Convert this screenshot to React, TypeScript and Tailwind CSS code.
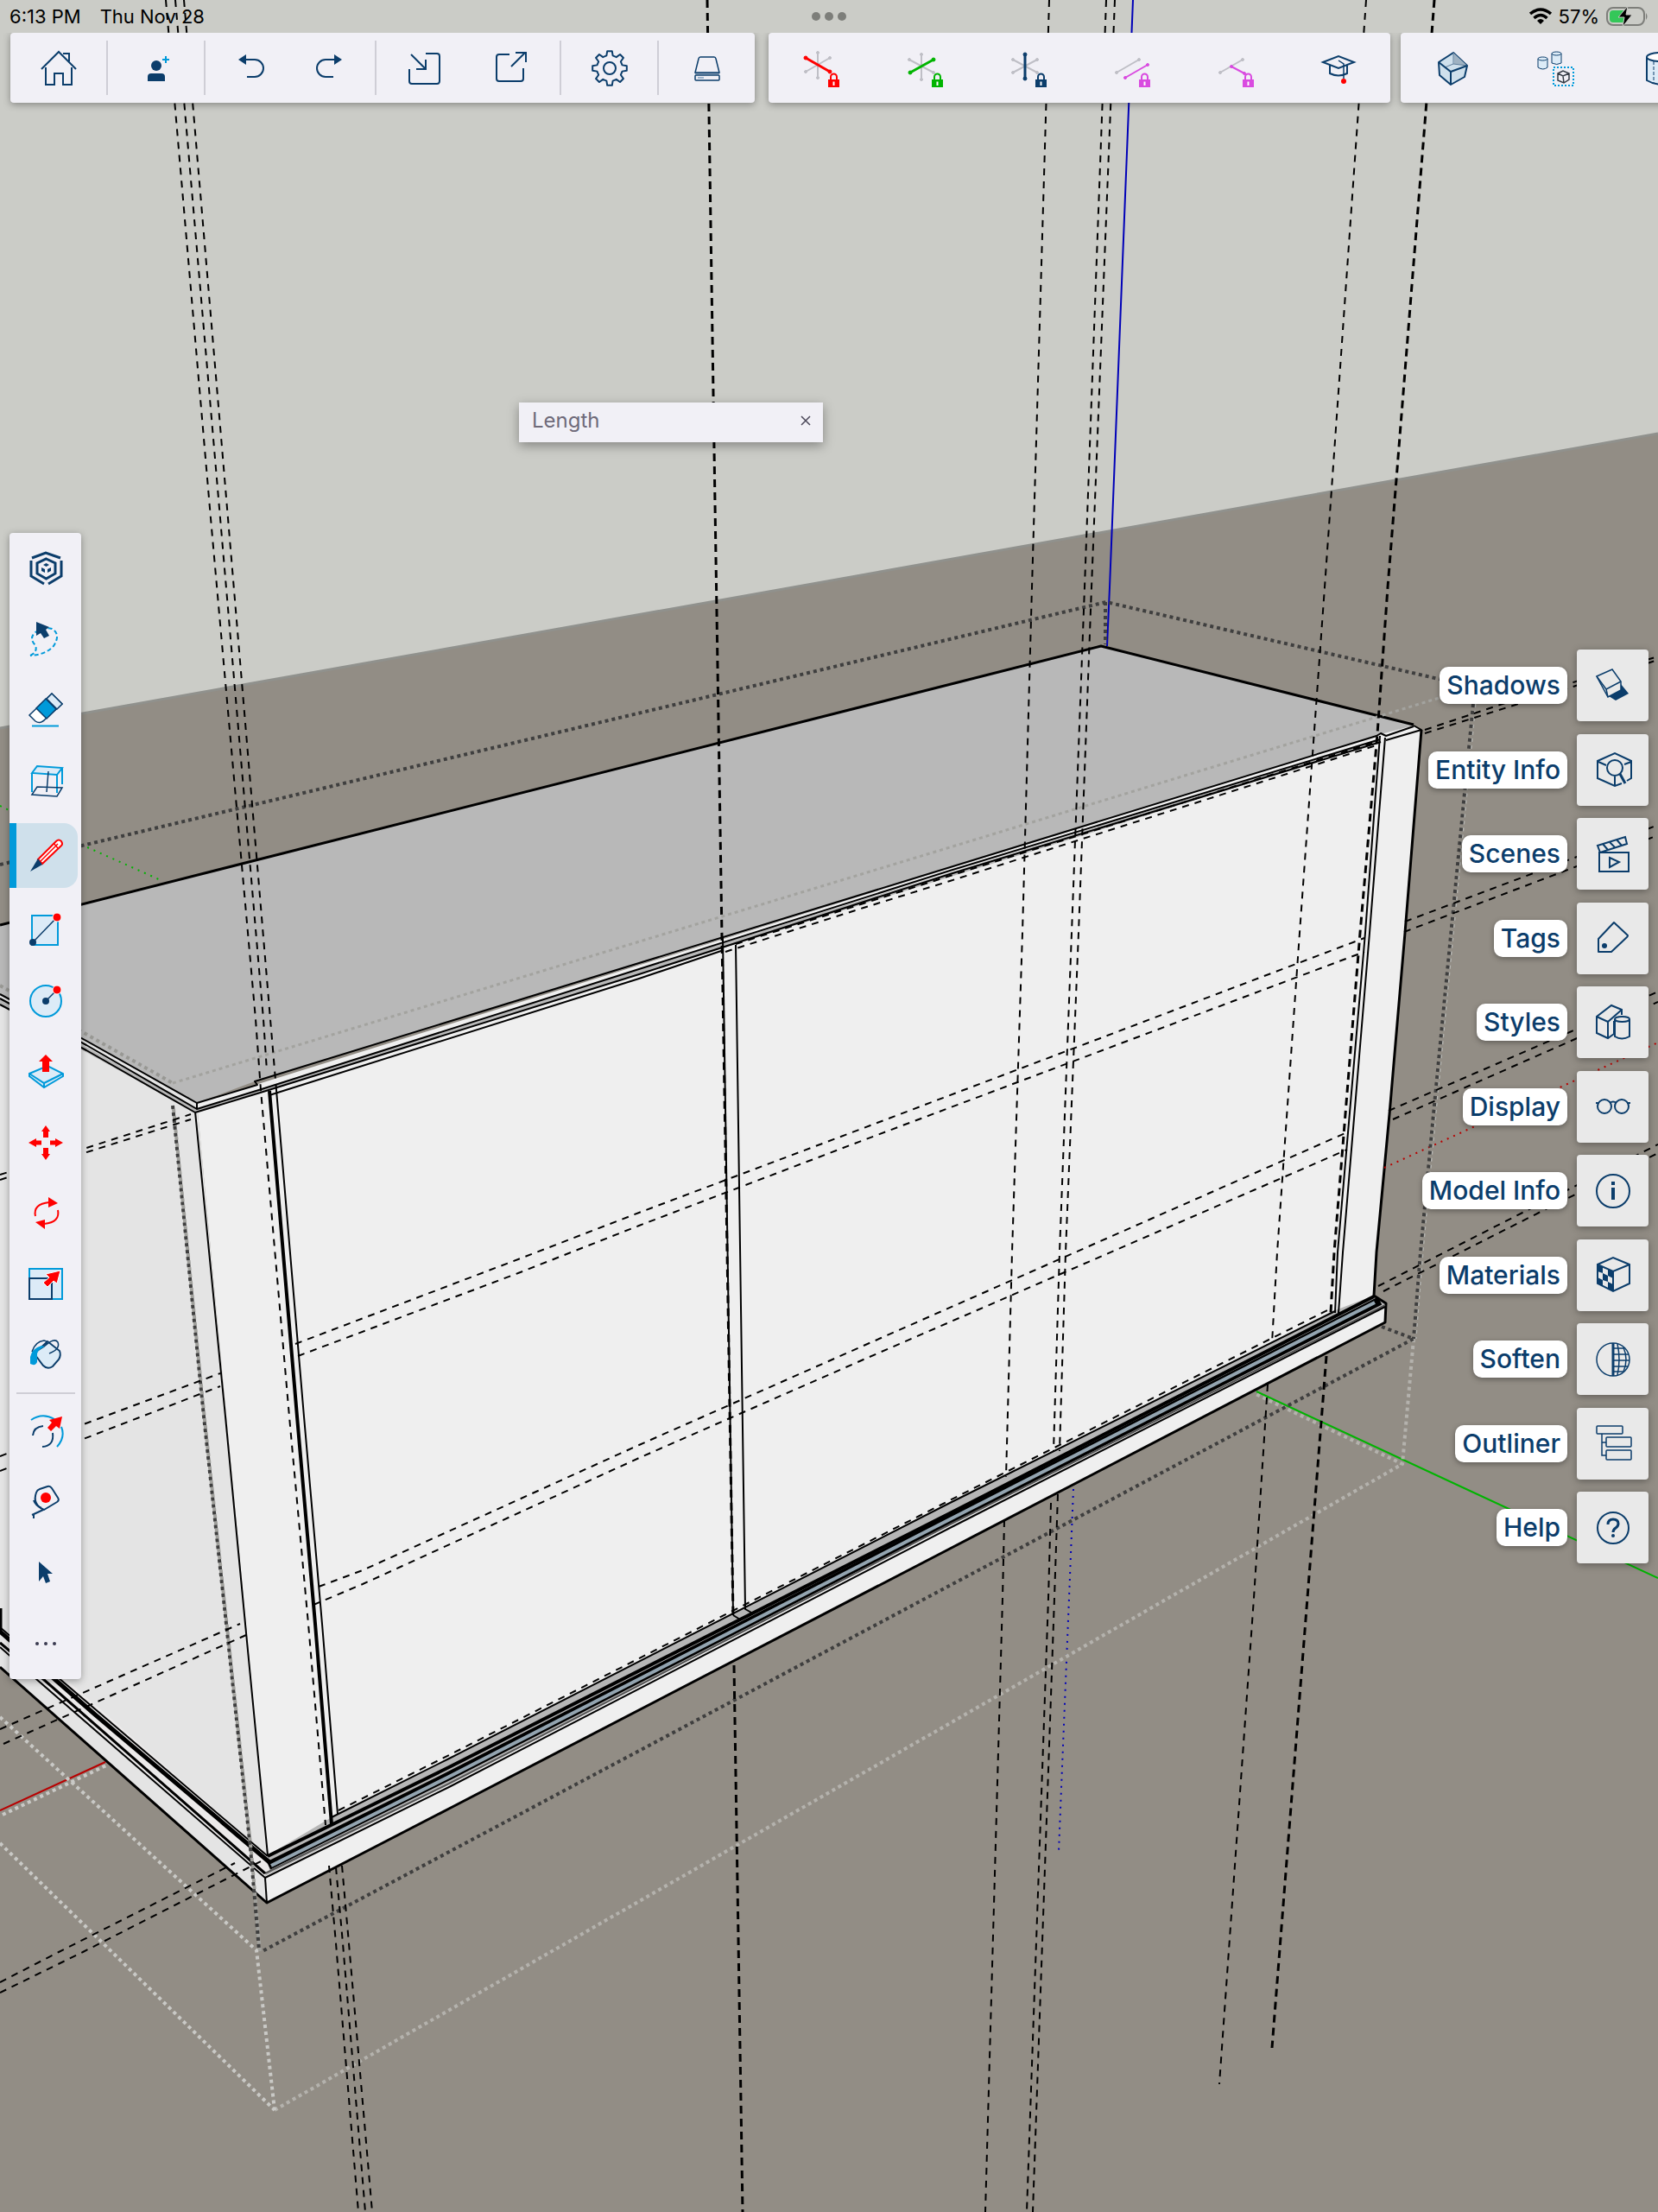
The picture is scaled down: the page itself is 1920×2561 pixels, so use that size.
import type { ReactNode } from "react"

const NAVY = "#0b3d6b"
const BLUE = "#009ada"
const PALE = "#dcebf7"
const RED = "#ff0000"
const GREY = "#bfbfc6"
const MAGENTA = "#d94be0"

/* ---------- model viewport ---------- */

const thinGuides = [
  // vertical guides, back left
  "M192 0L244 600L296 1180L302 1262L335 1640L357 1880L377 2113",
  "M203 0L255 600L305 1180L309 1240",
  "M213 0L264 600L313 1180L320 1262",
  "M381 2160L389 2250L415 2561",
  "M389 2162L397 2250L423 2561",
  "M396 2160L404 2250L431 2561",
  // vertical guides, right half
  "M1215 0L1195 680L1184 1080L1172 1450L1165 1710",
  "M1163 1760L1161 1850L1141 2561",
  "M1281 0L1256 680L1241 1080L1227 1450L1220 1680",
  "M1217 1740L1214 1850L1189 2561",
  "M1291 0L1264 680L1249 1080L1234 1450L1227 1680",
  "M1225 1730L1221 1850L1196 2561",
  "M1582 0L1534 680L1505 1080L1479 1450L1473 1555",
  "M1468 1603L1452 1850L1412 2413",
  // shelves on the front
  "M342 1556L600 1458L740 1404L1000 1306L1580 1086",
  "M345 1570L600 1474L740 1419L1000 1320L1580 1102",
  "M369 1837L420 1818L740 1673L1000 1558L1560 1311",
  "M363 1858L420 1834L740 1688L1000 1574L1560 1331",
  "M840 1102L1000 1051L1100 1020L1594 863",
  "M852 1093L1000 1046L1100 1014L1590 860",
  "M392 2096L520 2032L1100 1737L1541 1515",
  // past the right side
  "M1650 845L1740 815L1920 760",
  "M1650 849L1755 816L1920 764",
  "M1627 1067L1826 992L1920 955",
  "M1626 1079L1826 1003L1920 967",
  "M1608 1286L1820 1194L1920 1148",
  "M1613 1296L1824 1203L1920 1160",
  "M1596 1489L1765 1403L1920 1325",
  "M1602 1495L1782 1404L1920 1335",
  // left side
  "M0 1360L94 1331L221 1290",
  "M0 1366L94 1336L221 1296",
  "M0 1686L94 1650L255 1590",
  "M0 1703L94 1667L255 1605",
  "M0 2002L278 1880",
  "M4 2019L285 1893",
  "M0 2295L68 2260L272 2157",
  "M0 2307L96 2260L304 2154",
]

const boldGuides = [
  "M819 0L827 520L836 1085L849 1870",
  "M850 1928L860 2561",
  "M1661 0L1651 130L1607 680L1595 850L1575 1080L1545 1450L1541 1520",
  "M1536 1570L1514 1850L1473 2371",
]

const darkDots = [
  "M0 1001L95 979L1281 697L1670 787",
  "M1706 815L1660 1290L1645 1450L1637 1550",
  "M1600 1536L1637 1550L302 2260",
  "M1280 697V746",
  "M200 1280L236 1640L262 1880L290 2140L300 2258",
]

const lightDots = ["M0 1988L297 2258L318 2443", "M0 2134L318 2443", "M3 2101L125 2043"]

const edges = [
  "M226 1287L261 1640L284 1880L310 2148",
  "M228 1277L298 1256L295 1252L1594 852L1599 849L1605 852L1637 841",
  "M228 1277V1284L303 1261L740 1122L1100 1008L1598 856",
  "M226 1288L308 1263L740 1128L1100 1012L1599 859",
  "M312 1268L740 1133L838 1100",
  "M228 1277L100 1205L0 1151",
  "M228 1284L100 1210L0 1156",
  "M226 1288L100 1216L0 1163",
  "M320 1262L352 1640L373 1880L391 2100",
  "M837 1086L849 1870",
  "M852 1094L863 1863L872 1868",
  "M849 1870L857 1875",
  "M1598 852L1581 1080L1549 1450L1546 1520",
  "M1604 854L1586 1080L1555 1450L1550 1520",
  "M1605 857L1646 845L1637 840",
]

function Viewport() {
  return (
    <svg
      aria-hidden="true"
      className="absolute inset-0 h-full w-full"
      viewBox="0 0 1920 2561"
      preserveAspectRatio="xMidYMid slice"
      fill="none"
      strokeLinejoin="round"
    >
      <rect width="1920" height="2561" fill="#cbccc7" />
      <path d="M0 843L1920 502V2561H0Z" fill="#928d85" />
      <path d="M0 843L1920 502" stroke="#90918d" strokeWidth="3" />

      {/* carcass */}
      <path d="M0 1071L1275 748L1637 839L1605 853L295 1252L228 1277L0 1151Z" fill="#b8b8b8" />
      <path d="M0 1151L228 1277L310 2148L309 2203L0 1930Z" fill="#e4e4e4" />
      <path d="M228 1277L1599 850L1637 840L1646 845L1591 1500L1605 1509L1604 1531L309 2203L307 2172L310 2148Z" fill="#efefef" />
      <path d="M0 1156L228 1284L740 1122L1598 856L1599 859L740 1128L226 1288L0 1163Z" fill="#b8b8b8" />

      {/* base rails */}
      <path d="M384 2104L520 2036L1100 1740L1541 1519L1591 1500L1605 1509L1100 1766L520 2066L307 2172L310 2148Z" fill="#b6b6b6" />
      <path d="M12 1888L310 2148L312 2166L306 2172L0 1905Z" fill="#eceaea" />

      <g stroke="#000">
        <path d="M0 1071L1275 748L1637 839" strokeWidth="3" />
        <path d="M1646 845L1627 1080L1609 1290L1594 1450L1591 1500L1605 1509L1604 1531L1100 1793L520 2094L309 2203L0 1930" strokeWidth="3" />
        <path d="M312 1263L344 1640L365 1880L384 2112" strokeWidth="4" />
        {edges.map((d) => (
          <path key={d} d={d} strokeWidth="2" />
        ))}
        <path d="M384 2104L520 2036L1100 1740L1546 1518" strokeWidth="2" />
        <path d="M310 2149L520 2046L1100 1752L1591 1501" strokeWidth="4" />
        <path d="M311 2160L520 2056L1100 1759L1598 1506" strokeWidth="10" />
        <path d="M307 2169L520 2065L1100 1765L1604 1511" stroke="#555" strokeWidth="2" />
        <path d="M307 2174L520 2069L1100 1769L1604 1513" strokeWidth="2" />
        <path d="M307 2174L309 2203" strokeWidth="2" />
        <path d="M0 1884L67 1942L310 2149" strokeWidth="2" />
        <path d="M0 1889L110 1985L312 2156" strokeWidth="5" />
        <path d="M0 1902L50 1944L307 2169" strokeWidth="3" />
        <path d="M0 1907L42 1944L307 2174" strokeWidth="2" />
        <path d="M0 1862V1890" strokeWidth="5" />
      </g>
      <path d="M314 2160L520 2057L1100 1759L1592 1508" stroke="#93a4b0" strokeWidth="4" />

      {/* axes */}
      <path d="M1312 0L1285 680L1282 748" stroke="#0000b8" strokeWidth="2" />
      <path d="M1455 1611L1700 1725L1920 1827" stroke="#00b400" strokeWidth="2" />
      <path d="M0 2096L122 2040" stroke="#b80000" strokeWidth="2" />
      <path d="M1243 1724L1238 1850L1226 2144" stroke="#0000b8" strokeWidth="2" strokeDasharray="2 6" />
      <path d="M0 933L90 976L186 1019" stroke="#00b400" strokeWidth="2" strokeDasharray="2 6" />
      <path d="M1603 1352L1920 1207" stroke="#b80000" strokeWidth="2" strokeDasharray="2 6" />

      {/* selection bounds */}
      <g stroke="#c9c9c6" strokeWidth="4" strokeDasharray="4 4">
        <path d="M200 1254L1100 981L1670 807" stroke="#a3a39f" strokeWidth="3" />
        <path d="M0 1141L200 1254" stroke="#989894" />
        <path d="M1708 815L1662 1290L1647 1450L1639 1550" stroke="#b5b5b1" strokeWidth="3" />
        <path d="M201 1284L237 1644L263 1884L291 2144L301 2260" stroke="#a0a09c" />
        <path d="M318 2443L1624 1695L1452 1613M1637 1550L1624 1695" stroke="#b4b2ad" />
        {lightDots.map((d) => (
          <path key={d} d={d} />
        ))}
      </g>
      <g stroke="#3f3f3f" strokeWidth="4" strokeDasharray="4 4">
        {darkDots.map((d) => (
          <path key={d} d={d} />
        ))}
      </g>

      <g stroke="#000" strokeWidth="2" strokeDasharray="8 7">
        {thinGuides.map((d) => (
          <path key={d} d={d} />
        ))}
      </g>
      <g stroke="#000" strokeWidth="3" strokeDasharray="9 6">
        {boldGuides.map((d) => (
          <path key={d} d={d} />
        ))}
      </g>
    </svg>
  )
}

/* ---------- icons ---------- */

function Icon({ children, tall = false }: { children: ReactNode; tall?: boolean }) {
  return (
    <svg
      aria-hidden="true"
      className={tall ? "h-[60px] w-12" : "h-12 w-12"}
      viewBox={tall ? "0 0 48 60" : "0 0 48 48"}
      fill="none"
      stroke={NAVY}
      strokeWidth="2"
    >
      {children}
    </svg>
  )
}

function gearPath() {
  const parts: string[] = []
  for (let i = 0; i < 8; i++) {
    const steps = [
      [15, -14],
      [20, -8],
      [20, 8],
      [15, 14],
    ]
    for (const [r, a] of steps) {
      const t = ((i * 45 + a) * Math.PI) / 180
      parts.push(`${(24 + r * Math.sin(t)).toFixed(2)} ${(24 - r * Math.cos(t)).toFixed(2)}`)
    }
  }
  return `M${parts.join("L")}Z`
}

function Lock({ color }: { color: string }) {
  return (
    <g stroke={color}>
      <path d="M36 44V40a3.5 3.5 0 0 1 7 0V44" />
      <rect x="33" y="43" width="13" height="9" fill={color} stroke="none" />
      <path d="M39.5 45.5V50" stroke="#fff" />
    </g>
  )
}

function Rod({ x1, y1, x2, y2, color, bold }: { x1: number; y1: number; x2: number; y2: number; color: string; bold?: boolean }) {
  return (
    <g stroke={color} fill={color}>
      <line x1={x1} y1={y1} x2={x2} y2={y2} strokeWidth={bold ? 3 : 2} />
      <circle cx={x1} cy={y1} r={bold ? 2 : 1.5} strokeWidth="1" />
      <circle cx={x2} cy={y2} r={bold ? 2 : 1.5} strokeWidth="1" />
    </g>
  )
}

const fileGroups = [
  {
    pad: "px-[10px]",
    items: [
      {
        name: "Home",
        width: "w-[91px]",
        icon: (
          <Icon>
            <path d="M4 25L24 5L44 25M29 7H36V16M9 23V43H19V30H29V43H39V23" />
          </Icon>
        ),
      },
    ],
  },
  {
    pad: "px-[10px]",
    items: [
      {
        name: "Add collaborator",
        width: "w-[91px]",
        icon: (
          <Icon>
            <circle cx="24" cy="21" r="6" fill={NAVY} stroke="none" />
            <path d="M14 39V34Q14 30 18 30H30Q34 30 34 34V39Z" fill={NAVY} stroke="none" />
            <path d="M35 10V18M31 14H39" stroke={BLUE} />
          </Icon>
        ),
      },
    ],
  },
  {
    pad: "px-2",
    items: [
      {
        name: "Undo",
        width: "w-[90px]",
        icon: (
          <Icon>
            <path d="M17 14H28a10 10 0 0 1 0 20H19" />
            <path d="M9 14L18 8V20Z" fill={NAVY} stroke="none" />
          </Icon>
        ),
      },
      {
        name: "Redo",
        width: "w-[90px]",
        icon: (
          <Icon>
            <path d="M31 14H20a10 10 0 0 0 0 20H29" />
            <path d="M39 14L30 8V20Z" fill={NAVY} stroke="none" />
          </Icon>
        ),
      },
    ],
  },
  {
    pad: "px-[6px]",
    items: [
      {
        name: "Import",
        width: "w-[100px]",
        icon: (
          <Icon>
            <path d="M8 8L25 25M14 25H25V14M25 7H38Q41 7 41 10V39Q41 42 38 42H9Q6 42 6 39V25" />
          </Icon>
        ),
      },
      {
        name: "Export",
        width: "w-[100px]",
        icon: (
          <Icon>
            <path d="M22 8H10Q7 8 7 11V36Q7 39 10 39H35Q38 39 38 36V24M24 22L40 6M29 6H41V17" />
          </Icon>
        ),
      },
    ],
  },
  {
    pad: "px-[10px]",
    items: [
      {
        name: "Settings",
        width: "w-[91px]",
        icon: (
          <Icon>
            <path d={gearPath()} strokeLinejoin="round" />
            <circle cx="24" cy="24" r="7" />
          </Icon>
        ),
      },
    ],
  },
  {
    pad: "px-[10px]",
    items: [
      {
        name: "Storage",
        width: "w-[91px]",
        icon: (
          <Icon>
            <path d="M16 11H32Q33.5 11 34 13L38 29H10L14 13Q14.5 11 16 11Z" strokeWidth="1.5" />
            <path d="M10 30H38" strokeWidth="1" />
            <rect x="10" y="32" width="28" height="6" rx="1" strokeWidth="1.5" />
            <path d="M13 35H20" stroke="#9db4cc" />
          </Icon>
        ),
      },
    ],
  },
]

const axisTools = [
  {
    name: "Lock red axis",
    icon: (
      <Icon tall>
        <Rod x1={21} y1={12} x2={21} y2={41} color={GREY} />
        <Rod x1={35} y1={18} x2={7} y2={34} color={GREY} />
        <Rod x1={7} y1={18} x2={35} y2={34} color={RED} bold />
        <Lock color={RED} />
      </Icon>
    ),
  },
  {
    name: "Lock green axis",
    icon: (
      <Icon tall>
        <Rod x1={21} y1={14} x2={21} y2={43} color={GREY} />
        <Rod x1={7} y1={20} x2={35} y2={35} color={GREY} />
        <Rod x1={35} y1={20} x2={8} y2={35} color="#00b400" bold />
        <Lock color="#00b400" />
      </Icon>
    ),
  },
  {
    name: "Lock blue axis",
    icon: (
      <Icon tall>
        <Rod x1={7} y1={20} x2={35} y2={35} color={GREY} />
        <Rod x1={35} y1={20} x2={7} y2={35} color={GREY} />
        <Rod x1={21} y1={14} x2={21} y2={42} color={NAVY} bold />
        <Lock color={NAVY} />
      </Icon>
    ),
  },
  {
    name: "Lock parallel",
    icon: (
      <Icon tall>
        <Rod x1={7} y1={35} x2={33} y2={20} color={GREY} />
        <Rod x1={17} y1={41} x2={43} y2={26} color={MAGENTA} />
        <Lock color={MAGENTA} />
      </Icon>
    ),
  },
  {
    name: "Lock perpendicular",
    icon: (
      <Icon tall>
        <Rod x1={7} y1={35} x2={33} y2={20} color={GREY} />
        <Rod x1={20} y1={28} x2={35} y2={36} color={MAGENTA} />
        <Lock color={MAGENTA} />
      </Icon>
    ),
  },
  {
    name: "Learn",
    icon: (
      <Icon tall>
        <path d="M6 23L24 16L42 23L24 30Z" />
        <path d="M14 27V36Q24 41 34 36V27" />
        <path d="M24 21L30 25V42" strokeWidth="1.5" />
        <circle cx="30" cy="45" r="3" fill={RED} stroke="none" />
      </Icon>
    ),
  },
]

const objectTools = [
  {
    name: "Solid",
    icon: (
      <Icon>
        <path d="M8 17L25 6L41 21L38 34L22 43L9 32Z" fill="#cfe0ec" strokeLinejoin="round" />
        <path d="M25 6L41 21L26 19Z" fill="#9fb2c2" stroke="none" />
        <path d="M25 6V19L41 21M25 19L15 23" strokeWidth="1" stroke="#5f7d99" />
        <path d="M8 17L22 28L41 21M22 28V43" />
      </Icon>
    ),
  },
  {
    name: "Components",
    icon: (
      <Icon>
        <g strokeWidth="1" fill={PALE}>
          <path d="M3 13V23Q9 27 14 23V13" />
          <ellipse cx="8.5" cy="13" rx="5.5" ry="2" />
          <path d="M19 7V18Q25 21 30 18V7" />
          <ellipse cx="24.5" cy="7" rx="5.5" ry="2" />
        </g>
        <rect x="21" y="23" width="23" height="21" stroke={BLUE} strokeDasharray="2 2" />
        <path d="M26 30L32 27L39 30V37L33 41L26 38ZM26 30L32 33L39 30M32 33L33 41" stroke="#333a44" strokeWidth="1.5" />
      </Icon>
    ),
  },
  {
    name: "Cylinder",
    icon: (
      <Icon>
        <path d="M9 11V38Q24 47 39 38V11" fill={PALE} />
        <ellipse cx="24" cy="11" rx="15" ry="5" fill="#fff" />
        <path d="M17 16V42M24 17V43" strokeWidth="1" strokeDasharray="4 2" />
      </Icon>
    ),
  },
]

const drawTools = [
  {
    name: "Toolbox",
    icon: (
      <Icon>
        <g strokeWidth="3">
          <path d="M8 12L24 6L41 12M7 15V33L22 42M42 15V33L27 42" />
          <path d="M24.5 13L35 18V30L24.5 36L14 30V18Z" />
        </g>
        <path d="M24.5 18L28 20L24.5 22L21 20ZM19 23L23 25V29L19 27ZM30 23L26 25V29L30 27Z" fill={NAVY} stroke="none" />
      </Icon>
    ),
  },
  {
    name: "Lasso",
    icon: (
      <Icon>
        <path d="M6 43Q15 39 12 31Q4 23 12 16Q22 9 31 12Q42 18 33 32Q24 42 6 43" stroke={BLUE} strokeDasharray="5 3" />
        <path d="M13 4L28 10L24 13L28 20L22 23L18 17L13 20Z" fill={NAVY} stroke="none" />
      </Icon>
    ),
  },
  {
    name: "Eraser",
    icon: (
      <Icon>
        <path d="M31 5L43 17L24 34Q18 41 12 37L5 30Z" fill="#fff" strokeWidth="1.5" />
        <path d="M31 5L43 17L37 23L25 11Z" fill={PALE} strokeWidth="1.5" />
        <path d="M24 11L36 23L25 34L13 22Z" fill={BLUE} strokeWidth="1.5" />
        <path d="M8 42.5H39" stroke={BLUE} />
      </Icon>
    ),
  },
  {
    name: "Section",
    icon: (
      <Icon>
        <path d="M8 15L14 7L43 9L37 17Z" fill={PALE} stroke={BLUE} />
        <path d="M8 15V37M37 17V38M43 9V28" stroke={BLUE} />
        <path d="M8 40L14 31L43 32L37 42ZM25 37L27 13" strokeWidth="1.5" />
      </Icon>
    ),
  },
  {
    name: "Line",
    active: true,
    icon: (
      <Icon>
        <path d="M15 28L36 7Q39 4 42 7Q44 10 42 12L20 33Z" fill="#fff" stroke={RED} />
        <path d="M33 9L38 15M18 30L38 10" stroke={RED} strokeWidth="1.5" />
        <path d="M15 27L20 34L6 42Z" fill={NAVY} stroke="none" />
      </Icon>
    ),
  },
  {
    name: "Rectangle",
    icon: (
      <Icon>
        <rect x="8" y="7" width="30" height="34" fill={PALE} stroke={BLUE} />
        <path d="M9 38L37 9" strokeWidth="1.5" />
        <circle cx="9" cy="38" r="4" fill={NAVY} stroke="none" />
        <circle cx="37" cy="9" r="5" fill={RED} stroke="#fff" strokeWidth="1" />
      </Icon>
    ),
  },
  {
    name: "Circle",
    icon: (
      <Icon>
        <circle cx="24" cy="24" r="18" fill={PALE} stroke={BLUE} />
        <path d="M24 24L37 11" strokeWidth="1.5" />
        <circle cx="24" cy="24" r="4" fill={NAVY} stroke="none" />
        <circle cx="37" cy="11" r="5" fill={RED} stroke="#fff" strokeWidth="1" />
      </Icon>
    ),
  },
  {
    name: "Push/Pull",
    icon: (
      <Icon>
        <path d="M5 26L26 17L44 26V29L22 42L5 29Z" fill={PALE} stroke={BLUE} />
        <path d="M5 26L22 37L44 26M22 37V42" stroke={BLUE} />
        <path d="M24 4L32 12H28V24H20V12H16Z" fill={RED} stroke="none" />
      </Icon>
    ),
  },
  {
    name: "Move",
    icon: (
      <Icon>
        <g fill={RED} stroke="none">
          <path d="M24 4L29 11H27V18H21V11H19Z" />
          <path d="M24 44L29 37H27V30H21V37H19Z" />
          <path d="M4 24L13 19V21.5H19V26.5H13V29Z" />
          <path d="M44 24L35 19V21.5H29V26.5H35V29Z" />
        </g>
      </Icon>
    ),
  },
  {
    name: "Rotate",
    icon: (
      <Icon>
        <path d="M12 27Q9 13 28 11M38 20Q41 34 22 36" stroke={RED} />
        <path d="M27 5L38 12L27 17ZM23 31L12 34L23 42Z" fill={RED} stroke="none" />
      </Icon>
    ),
  },
  {
    name: "Scale",
    icon: (
      <Icon>
        <rect x="5" y="6" width="38" height="35" fill={PALE} stroke={BLUE} />
        <rect x="5" y="17" width="26" height="24" />
        <path d="M41 8L37 23L33 20L26 27L21 22L28 16L24 12Z" fill={RED} stroke="#fff" strokeWidth="1" />
      </Icon>
    ),
  },
  {
    name: "Paint",
    icon: (
      <Icon>
        <path d="M12 21L26 8L40 19Q42 24 39 29L32 37Q26 41 21 36L12 24" fill={PALE} />
        <path d="M8 20Q12 8 22 7Q28 8 22 14Q14 19 9 21M22 14Q34 3 38 9Q41 17 28 22" strokeWidth="1.5" />
        <path d="M23 14Q13 18 14 25V32Q12 37 6 34V26Q8 16 19 13Z" fill={BLUE} stroke="none" />
      </Icon>
    ),
  },
]

const editTools = [
  {
    name: "Offset",
    icon: (
      <Icon>
        <path d="M7 11Q20 2 34 10M42 19Q47 31 37 42" stroke={BLUE} />
        <path d="M9 29Q10 19 21 18M32 26Q34 41 20 42" />
        <path d="M43 7L40 21L36 18L30 24L26 20L31 14L28 11Z" fill={RED} stroke="none" />
      </Icon>
    ),
  },
  {
    name: "Tape measure",
    icon: (
      <Icon>
        <path d="M13 13Q14 10 17 9L26 6Q29 5 31 8L38 19Q40 22 37 24L22 33Q8 27 13 13Z" />
        <path d="M10 22Q12 28 19 31M8 39L21 33M10 38V43" />
        <circle cx="24" cy="19" r="6" fill={RED} stroke="none" />
      </Icon>
    ),
  },
  {
    name: "Select",
    icon: (
      <Icon>
        <path d="M16 11L32 25H26L29 34L24 36L21 28L16 34Z" fill={NAVY} stroke="none" />
      </Icon>
    ),
  },
  {
    name: "More",
    icon: (
      <Icon>
        <g fill="#3a3a50" stroke="none">
          <circle cx="14" cy="24" r="2" />
          <circle cx="24" cy="24" r="2" />
          <circle cx="34" cy="24" r="2" />
        </g>
      </Icon>
    ),
  },
]

const panels = [
  {
    name: "Shadows",
    icon: (
      <Icon>
        <path d="M33 22L42 33L27 41L19 36Z" fill={NAVY} stroke="none" />
        <path d="M5 13L23 5L33 19V29L18 37Z" fill="#e9e9e9" strokeWidth="1.5" />
        <path d="M5 13L16 28L33 19M16 28L18 37" strokeWidth="1.5" />
      </Icon>
    ),
  },
  {
    name: "Entity Info",
    icon: (
      <Icon>
        <path d="M34 40L26 43L6 34V14L26 5L45 14V34L40 37M26 43V32M7 15L16 19M45 15L37 18" />
        <circle cx="26" cy="22" r="9" fill="#e9e9e9" />
        <path d="M32 29L38 40" strokeWidth="3" />
      </Icon>
    ),
  },
  {
    name: "Scenes",
    icon: (
      <Icon>
        <rect x="8" y="22" width="34" height="22" />
        <path d="M20 28L31 33L20 39ZM6 14L38 4L40 12L9 22Z" />
        <path d="M12 12L18 19M20 10L26 16M28 7L34 14" />
      </Icon>
    ),
  },
  {
    name: "Tags",
    icon: (
      <Icon>
        <path d="M7 25L25 6L41 21Q41 22 40 23L22 40H7Z" strokeLinejoin="round" />
        <circle cx="14" cy="33" r="3" fill={NAVY} stroke="none" />
      </Icon>
    ),
  },
  {
    name: "Styles",
    icon: (
      <Icon>
        <path d="M25 37L18 42L5 36V17L22 4L34 9V15M5 17L18 23L34 9M18 23V42M25 22V38" />
        <path d="M26 20V40Q34 45 43 40V20" fill="#e9e9e9" />
        <ellipse cx="34.5" cy="20" rx="8.5" ry="3" fill="#e9e9e9" />
      </Icon>
    ),
  },
  {
    name: "Display",
    icon: (
      <Icon>
        <circle cx="14" cy="24" r="8" />
        <circle cx="34" cy="24" r="8" />
        <path d="M4 20H8M40 20H44M20 20Q24 17 28 20" />
      </Icon>
    ),
  },
  {
    name: "Model Info",
    icon: (
      <Icon>
        <circle cx="24" cy="24" r="19" />
        <path d="M24 20V34M24 13V17" strokeWidth="4" />
      </Icon>
    ),
  },
  {
    name: "Materials",
    icon: (
      <Icon>
        <path d="M6 12L24 4L43 12V34L24 43L6 34ZM6 12L24 20L43 12M24 20V43" />
        <path d="M6 12L12 15V22L6 20ZM18 17L24 20V28L18 25ZM12 22L18 25V32L12 30ZM6 27L12 30V37L6 34ZM18 32L24 35V43L18 40Z" fill={NAVY} stroke="none" />
      </Icon>
    ),
  },
  {
    name: "Soften",
    icon: (
      <Icon>
        <circle cx="24" cy="24" r="19" strokeWidth="1.5" />
        <path d="M24 5V43" strokeWidth="3" />
        <path d="M24 11H37M24 18H42M24 25H43M24 32H41M24 38H36M29 6Q33 24 29 42M36 10Q42 24 36 38" strokeWidth="1.5" />
      </Icon>
    ),
  },
  {
    name: "Outliner",
    icon: (
      <Icon>
        <g strokeWidth="1.5">
          <rect x="5" y="4" width="30" height="9" rx="1" />
          <rect x="16" y="17" width="29" height="11" rx="1" />
          <rect x="16" y="32" width="29" height="11" rx="1" />
          <path d="M11 13V38H16M11 23H16" />
        </g>
      </Icon>
    ),
  },
  {
    name: "Help",
    icon: (
      <Icon>
        <circle cx="24" cy="24" r="18" />
        <path d="M18 20Q18 14 24 14Q30 14 30 19Q30 22 27 24Q24 26 24 29" strokeWidth="3" />
        <circle cx="24" cy="33" r="2" fill={NAVY} stroke="none" />
      </Icon>
    ),
  },
]

/* ---------- chrome ---------- */

function StatusBar() {
  return (
    <div className="grid h-[38px] grid-cols-3 items-center pl-[11px] pr-[11px] text-[22px] leading-[36px] text-black">
      <div className="flex gap-[22px]">
        <span>6:13 PM</span>
        <span>Thu Nov 28</span>
      </div>
      <button type="button" aria-label="Multitasking" className="flex items-center justify-center gap-[5px]">
        <span className="h-[10px] w-[10px] rounded-full bg-[#7d7e7a]" />
        <span className="h-[10px] w-[10px] rounded-full bg-[#7d7e7a]" />
        <span className="h-[10px] w-[10px] rounded-full bg-[#7d7e7a]" />
      </button>
      <div className="flex items-center justify-end gap-2">
        <svg aria-hidden="true" className="h-5 w-[26px]" viewBox="0 0 26 20" fill="none" stroke="#000" strokeWidth="3.5">
          <path d="M1 7Q13 -3 25 7M5.5 12Q13 5 20.5 12" />
          <path d="M13 19L9 15Q13 11 17 15Z" fill="#000" stroke="none" />
        </svg>
        <span>57%</span>
        <svg aria-hidden="true" className="h-6 w-[49px]" viewBox="0 0 49 24" fill="none">
          <rect x="1" y="2" width="43" height="20" rx="7" stroke="#7d7e7a" strokeWidth="2" />
          <path d="M46 8Q49 12 46 16Z" fill="#7d7e7a" />
          <path d="M8 5H22V19H8Q4 19 4 15V9Q4 5 8 5Z" fill="#34c759" />
          <path d="M25 0L14 13H21L19 24L30 10H23Z" fill="#000" stroke="#cbccc7" strokeWidth="1" />
        </svg>
      </div>
    </div>
  )
}

const bar = "flex h-[81px] shrink-0 items-center bg-[#f1f0f6] shadow-[0_2px_8px_rgba(0,0,0,0.35)]"

function TopToolbars() {
  return (
    <div className="flex overflow-hidden pb-4 pl-3">
      <div role="toolbar" aria-label="File" className={`${bar} mr-4 divide-x-2 divide-[#cfced6] rounded`}>
        {fileGroups.map((group) => (
          <div key={group.items[0].name} className={`flex h-[63px] ${group.pad}`}>
            {group.items.map((item) => (
              <button key={item.name} type="button" aria-label={item.name} className={`flex items-center justify-center ${item.width}`}>
                {item.icon}
              </button>
            ))}
          </div>
        ))}
      </div>
      <div role="toolbar" aria-label="Axis locks" className={`${bar} mr-3 rounded`}>
        {axisTools.map((tool) => (
          <button key={tool.name} type="button" aria-label={tool.name} className="flex h-full w-[120px] items-center justify-center">
            {tool.icon}
          </button>
        ))}
      </div>
      <div role="toolbar" aria-label="Objects" className={`${bar} rounded-l`}>
        {objectTools.map((tool) => (
          <button key={tool.name} type="button" aria-label={tool.name} className="flex h-full w-[120px] items-center justify-center">
            {tool.icon}
          </button>
        ))}
      </div>
    </div>
  )
}

function ToolButton({ name, icon, active }: { name: string; icon: ReactNode; active?: boolean }) {
  return (
    <button type="button" aria-label={name} aria-pressed={!!active} className="flex min-h-[82px] w-full grow items-center">
      {active ? (
        <span className="mr-1 flex h-[75px] w-full items-center justify-center rounded-r-2xl border-l-8 border-[#009ada] bg-[#cfe0eb] pr-1">
          {icon}
        </span>
      ) : (
        <span className="flex w-full items-center justify-center">{icon}</span>
      )}
    </button>
  )
}

export default function App() {
  return (
    <main className="relative min-h-screen overflow-hidden font-['Inter','Liberation_Sans',sans-serif]">
      <Viewport />
      <div className="relative">
        <StatusBar />
        <TopToolbars />

        <div className="flex items-start pl-[11px] pr-[11px]">
          <div
            role="toolbar"
            aria-label="Drawing tools"
            className="mt-[482px] flex min-h-[1327px] w-[83px] flex-col items-center rounded bg-[#f1f0f6] shadow-[0_2px_8px_rgba(0,0,0,0.35)]"
          >
            {drawTools.map((tool) => (
              <ToolButton key={tool.name} {...tool} />
            ))}
            <hr className="my-[2px] w-[68px] border-t-2 border-[#cfced6]" />
            {editTools.map((tool) => (
              <ToolButton key={tool.name} {...tool} />
            ))}
          </div>

          <div className="ml-[507px] mt-[331px] flex h-[46px] w-[352px] items-center bg-[#f1f0f6] pb-1 pl-[15px] pr-[10px] shadow-[0_4px_12px_rgba(0,0,0,0.35)]">
            <input
              aria-label="Length"
              placeholder="Length"
              className="w-0 flex-1 bg-transparent text-[24px] leading-[30px] outline-none placeholder:text-[#6f6b7a]"
            />
            <button type="button" aria-label="Close" className="flex h-5 w-5 items-center justify-center">
              <svg aria-hidden="true" className="h-3 w-3" viewBox="0 0 12 12" stroke="#4a4758" strokeWidth="1.5">
                <path d="M1 1L11 11M11 1L1 11" />
              </svg>
            </button>
          </div>

          <div className="ml-auto mt-[617px] flex min-h-[1058px] flex-col items-end justify-between">
            {panels.map((panel) => (
              <button key={panel.name} type="button" className="flex items-center gap-[11px]">
                <span className="rounded-[10px] bg-white px-2 pb-[5px] pt-1 text-[30px] font-medium leading-[34px] text-[#0b3d6b] shadow-[0_2px_6px_rgba(0,0,0,0.35)]">
                  {panel.name}
                </span>
                <span className="flex h-[83px] w-[83px] items-center justify-center rounded-sm bg-[#e9e9e9] shadow-[0_2px_8px_rgba(0,0,0,0.35)]">
                  {panel.icon}
                </span>
              </button>
            ))}
          </div>
        </div>
      </div>
    </main>
  )
}
